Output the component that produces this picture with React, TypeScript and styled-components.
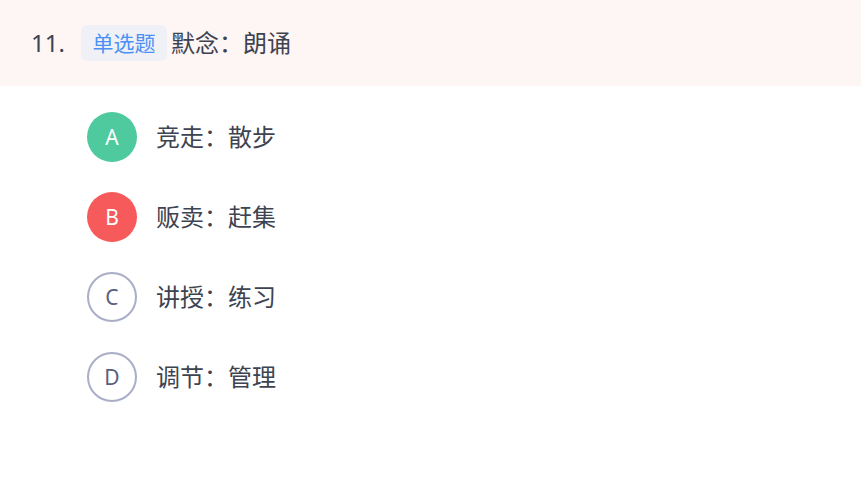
import React from 'react';
import styled, { createGlobalStyle } from 'styled-components';

const GlobalStyle = createGlobalStyle`
  html, body {
    margin: 0;
    padding: 0;
    background: #ffffff;
    font-family: "Noto Sans", "Noto Sans CJK SC", sans-serif;
  }
`;

type Status = 'right' | 'wrong' | 'none';

const options: { key: string; text: string; status: Status }[] = [
  { key: 'A', text: '竞走：散步', status: 'right' },
  { key: 'B', text: '贩卖：赶集', status: 'wrong' },
  { key: 'C', text: '讲授：练习', status: 'none' },
  { key: 'D', text: '调节：管理', status: 'none' },
];

export default function App() {
  return (
    <>
      <GlobalStyle />
      <Page>
        <Header>
          <Num>11.</Num>
          <Tag>单选题</Tag>
          <Title>默念：朗诵</Title>
        </Header>
        <OptionList>
          {options.map(o => (
            <Option key={o.key}>
              <Badge $status={o.status}>{o.key}</Badge>
              <OptionText>{o.text}</OptionText>
            </Option>
          ))}
        </OptionList>
      </Page>
    </>
  );
}

const Page = styled.div`
  width: 861px;
  height: 483px;
  background: #ffffff;
`;
const Header = styled.div`
  display: flex;
  align-items: center;
  height: 86px;
  padding-left: 31px;
  background: #fef5f5;
  box-sizing: border-box;
`;
const Num = styled.span`
  font-size: 24px;
  line-height: 1;
  color: #3d4350;
  width: 50px;
`;
const Tag = styled.span`
  display: inline-flex;
  align-items: center;
  justify-content: center;
  height: 36px;
  width: 86px;
  border-radius: 6px;
  background: #f0f1f7;
  color: #4a90f5;
  font-size: 21px;
  line-height: 1;
  margin-right: 4px;
`;
const Title = styled.span`
  font-size: 24px;
  line-height: 1;
  color: #3d4350;
`;
const OptionList = styled.div`
  display: flex;
  flex-direction: column;
  gap: 30px;
  padding: 26px 0 0 87px;
`;
const Option = styled.div`
  display: flex;
  align-items: center;
  height: 50px;
`;
const Badge = styled.div<{ $status: Status }>`
  width: 50px;
  height: 50px;
  box-sizing: border-box;
  border-radius: 50%;
  display: flex;
  align-items: center;
  justify-content: center;
  font-size: 21px;
  margin-right: 19px;
  background: ${p => (p.$status === 'right' ? '#4fc99e' : p.$status === 'wrong' ? '#f75a5a' : '#ffffff')};
  color: ${p => (p.$status === 'none' ? '#5a6080' : '#ffffff')};
  border: ${p => (p.$status === 'none' ? '2px solid #a9aec6' : 'none')};
`;
const OptionText = styled.span`
  font-size: 24px;
  line-height: 1;
  color: #3d4350;
`;
